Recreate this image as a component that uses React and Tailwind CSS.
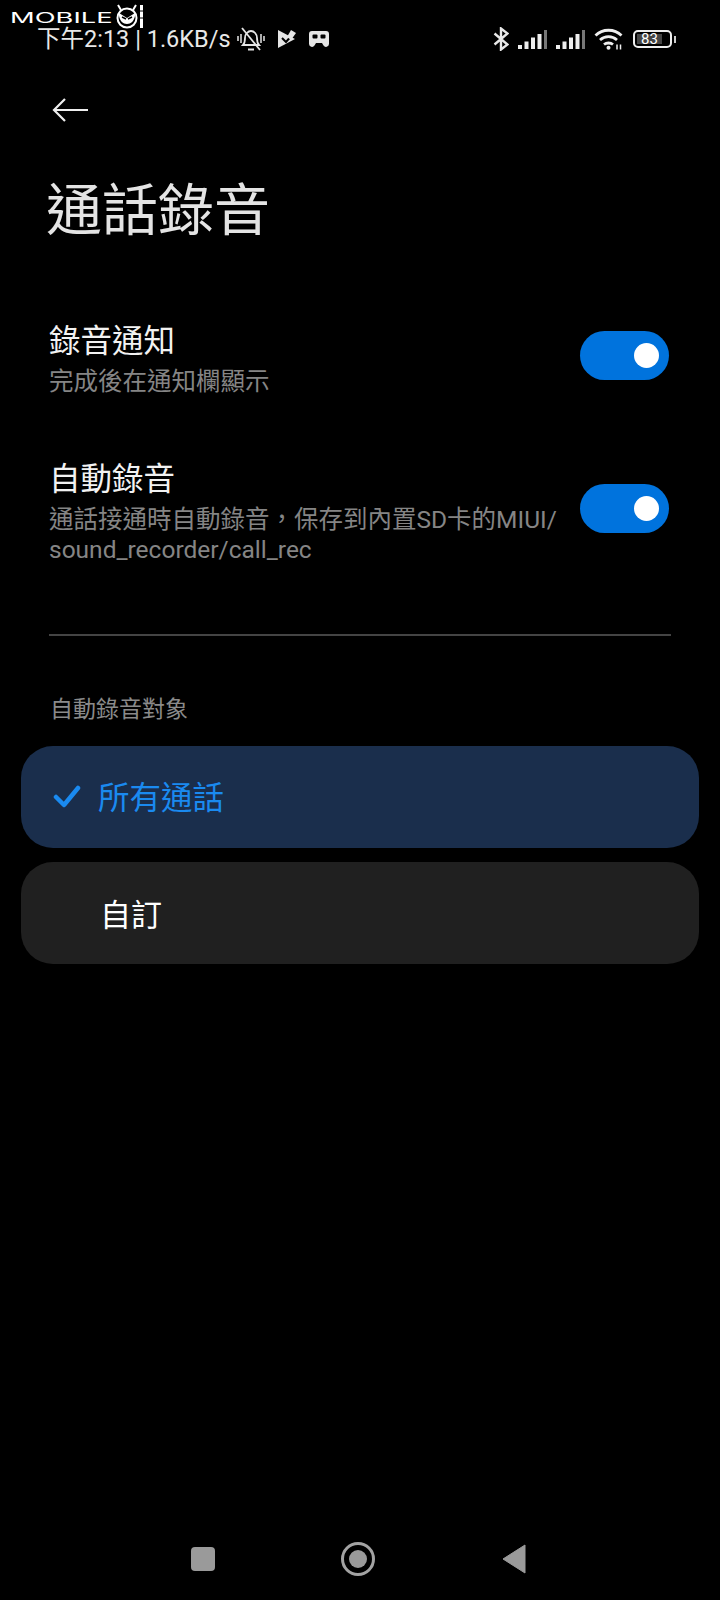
import React from "react";

const sans = "font-['Roboto','Noto_Sans_CJK_TC',sans-serif]";

// Watermark face next to the logo text
function Face() {
  return (
    <svg width="30" height="30" viewBox="0 0 30 30" fill="none" className="shrink-0">
      <circle cx="11" cy="16" r="9.500" stroke="#fff" strokeWidth="2" />
      <path d="M5 8 2 3M17 8l3-5" stroke="#fff" strokeWidth="2" />
      <path d="M3 11l8 5 8-5v3c-1 5-4 8-8 8s-7-3-8-8Z" fill="#fff" />
      <path d="M6 15l4 2M16 15l-4 2" stroke="#000" strokeWidth="1.500" />
      <path d="M25.500 3v23" stroke="#fff" strokeWidth="3" />
      <path d="M23.500 9h4M23.500 16h4" stroke="#000" strokeWidth="1" />
    </svg>
  );
}

function MuteBell() {
  return (
    <svg width="28" height="24" viewBox="0 0 28 24" fill="none" stroke="#e5e5e5" strokeWidth="1.800">
      <path d="M6 18c2-2 2-4 2-7 0-4 3-7 6-7s6 3 6 7c0 3 0 5 2 7Z" />
      <path d="M11 22.500h6" strokeWidth="2" />
      <path d="M5 1l18 22" />
      <path d="M1 9v5M4 7v9M24 7v9M27 9v5" strokeWidth="1.500" />
    </svg>
  );
}

function PlayCheck() {
  return (
    <svg width="18" height="18" viewBox="0 0 18 18">
      <path d="M0 0l17 9L0 18Z" fill="#e5e5e5" />
      <path d="M4 8l4 4 7-8" fill="none" stroke="#000" strokeWidth="2" />
      <path d="M9 7l4-7 5 3-5 7Z" fill="#e5e5e5" />
    </svg>
  );
}

function Gamepad() {
  return (
    <svg width="20" height="16" viewBox="0 0 20 16">
      <path d="M3 0h14a3 3 0 0 1 3 3v10a3 3 0 0 1-5.500 1.500L13 12H7l-1.500 2.500A3 3 0 0 1 0 13V3a3 3 0 0 1 3-3Z" fill="#e5e5e5" />
      <rect x="3.500" y="3.500" width="5" height="4" rx="1" fill="#000" />
      <rect x="11.500" y="3.500" width="5" height="4" rx="1" fill="#000" />
    </svg>
  );
}

function Bluetooth() {
  return (
    <svg width="16" height="24" viewBox="0 0 16 24" fill="none" stroke="#e8e8e8" strokeWidth="2.400">
      <path d="M1.500 6.500l13 11-6.500 5V1.500l6.500 5-13 11" />
    </svg>
  );
}

function Signal() {
  return (
    <svg width="29" height="19" viewBox="0 0 29 19">
      <rect x="0" y="15" width="4" height="4" fill="#eee" />
      <rect x="6.500" y="11.500" width="4" height="7.500" fill="#eee" />
      <rect x="13" y="7.500" width="4" height="11.500" fill="#eee" />
      <rect x="19.500" y="4" width="4" height="15" fill="#eee" />
      <rect x="26" y="0" width="3" height="19" fill="#777" />
    </svg>
  );
}

function Wifi() {
  return (
    <svg width="29" height="22" viewBox="0 0 29 22" fill="none" stroke="#eee" strokeWidth="2.800">
      <path d="M1.500 7.500c7-7 19-7 26 0" />
      <path d="M6 12c5-4.500 12-4.500 17 0" />
      <path d="M10 16.500c2.500-2 6.500-2 9 0" />
      <circle cx="14.500" cy="19.800" r="2" fill="#eee" stroke="none" />
      <path d="M23 16.500v5M26.500 16.500v5" strokeWidth="1.500" />
    </svg>
  );
}

function Battery() {
  return (
    <div className="flex items-center gap-[2px]">
      <div className="w-[39px] h-[18px] border-2 border-[#eee] rounded-[5px] p-[2px] flex">
        <div className="w-[80%] h-full bg-[#444] flex items-center justify-center text-[15px] leading-none text-white">
          83
        </div>
      </div>
      <div className="w-[2px] h-[7px] bg-[#ccc]" />
    </div>
  );
}

function Toggle() {
  return (
    <div className="w-[89px] h-[49px] mb-[8px] rounded-full bg-[#0073dd] flex items-center justify-end pr-[10px] shrink-0">
      <div className="w-[25px] h-[25px] rounded-full bg-white" />
    </div>
  );
}

function SettingRow({ title, sub, className }) {
  return (
    <div className={"flex items-center justify-between pl-[49px] pr-[51px] " + className}>
      <div>
        <div className="text-[31.500px] leading-[40px] text-[#f2f2f2]">{title}</div>
        <div className="text-[24.500px] leading-[30px] text-[#858585] mt-[5px] w-[512px]">{sub}</div>
      </div>
      <Toggle />
    </div>
  );
}

export default function App() {
  return (
    <div className={"relative w-[720px] h-[1600px] bg-black flex flex-col overflow-hidden " + sans}>
      {/* watermark */}
      <div className="absolute left-[10px] top-[2px] flex items-start">
        <span className="w-[106px] mt-[6px] origin-left scale-x-[1.950] font-['Inter'] text-[14px] leading-[20px] font-normal text-white">
          MOBILE
        </span>
        <Face />
      </div>

      {/* status bar */}
      <div className="h-[54px] pt-[24px] pl-[37px] pr-[44px] flex items-center justify-between text-[#e8e8e8]">
        <div className="flex items-center">
          <span className="text-[23.500px] leading-[30px]">下午2:13 | 1.6KB/s</span>
          <span className="ml-[6px]"><MuteBell /></span>
          <span className="ml-[13px]"><PlayCheck /></span>
          <span className="ml-[13px]"><Gamepad /></span>
        </div>
        <div className="flex items-center">
          <Bluetooth />
          <span className="ml-[9px]"><Signal /></span>
          <span className="ml-[9px]"><Signal /></span>
          <span className="ml-[9px]"><Wifi /></span>
          <span className="ml-[10px]"><Battery /></span>
        </div>
      </div>

      <div className="pl-[52px] mt-[44px]">
        <svg width="36" height="24" viewBox="0 0 36 24" fill="none" stroke="#eee" strokeWidth="2.200">
          <path d="M36 12H2" />
          <path d="M13 1 2 12l11 11" />
        </svg>
      </div>

      <h1 className="pl-[46px] mt-[53px] text-[56px] leading-[72px] font-normal text-[#e4e4e4]">通話錄音</h1>

      <SettingRow title="錄音通知" sub="完成後在通知欄顯示" className="mt-[75px]" />
      <SettingRow title="自動錄音" sub="通話接通時自動錄音，保存到內置SD卡的MIUI/ sound_recorder/call_rec" className="mt-[63px]" />

      <div className="mx-[49px] mt-[69px] h-[2px] bg-[#444]" />

      <div className="pl-[50px] mt-[59px] text-[23px] leading-[30px] text-[#8a8a8a]">自動錄音對象</div>

      <div className="mx-[21px] mt-[21px] h-[102px] rounded-[32px] bg-[#1a2e4c] flex items-center pl-[32px] text-[#1a8af0]">
        <svg width="28" height="24" viewBox="0 0 28 24" fill="none" stroke="currentColor" strokeWidth="4.500" strokeLinecap="round" strokeLinejoin="round">
          <path d="M3 12l8 8L25 3" />
        </svg>
        <span className="ml-[17px] mt-[4px] text-[31.500px] leading-[40px]">所有通話</span>
      </div>
      <div className="mx-[21px] mt-[14px] h-[102px] pt-[6px] rounded-[32px] bg-[#202020] flex items-center pl-[79px] text-[31px] text-white">
        自訂
      </div>

      {/* nav bar */}
      <div className="mt-auto mb-[24px] h-[34px] pl-[191px] flex items-center">
        <div className="w-[24px] h-[24px] rounded-[4px] bg-[#9a9a9a]" />
        <div className="ml-[126px] w-[34px] h-[34px] rounded-full border-[3px] border-[#a3a3a3] flex items-center justify-center">
          <div className="w-[18px] h-[18px] rounded-full bg-[#9a9a9a]" />
        </div>
        <svg className="ml-[127px]" width="24" height="30" viewBox="0 0 24 30">
          <path d="M23 1v28L1 15Z" fill="#9a9a9a" stroke="#9a9a9a" strokeLinejoin="round" />
        </svg>
      </div>
    </div>
  );
}
